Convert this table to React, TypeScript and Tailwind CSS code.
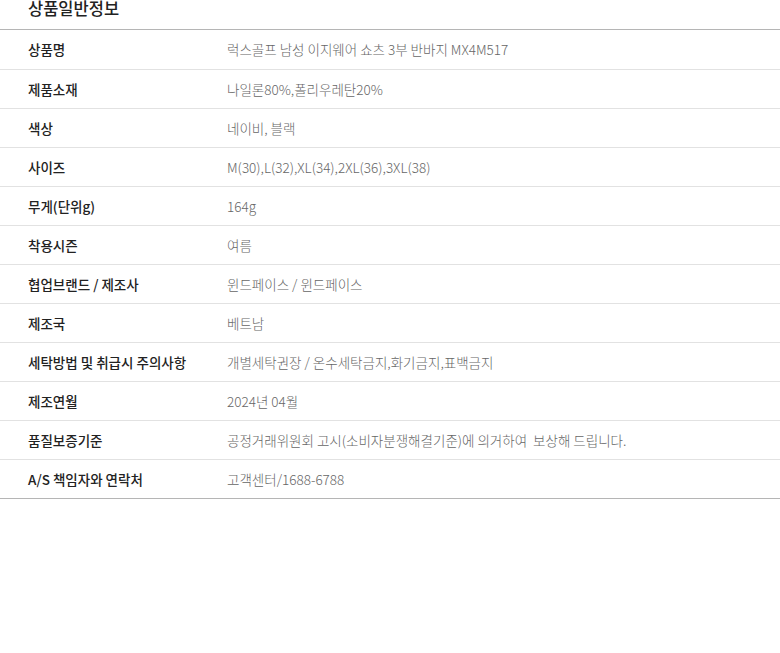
import React from 'react';

const rows: [string, string][] = [
  ['상품명', '럭스골프 남성 이지웨어 쇼츠 3부 반바지 MX4M517'],
  ['제품소재', '나일론80%,폴리우레탄20%'],
  ['색상', '네이비, 블랙'],
  ['사이즈', 'M(30),L(32),XL(34),2XL(36),3XL(38)'],
  ['무게(단위g)', '164g'],
  ['착용시즌', '여름'],
  ['협업브랜드 / 제조사', '윈드페이스 / 윈드페이스'],
  ['제조국', '베트남'],
  ['세탁방법 및 취급시 주의사항', '개별세탁권장 / 온수세탁금지,화기금지,표백금지'],
  ['제조연월', '2024년 04월'],
  ['품질보증기준', '공정거래위원회 고시(소비자분쟁해결기준)에 의거하여  보상해 드립니다.'],
  ['A/S 책임자와 연락처', '고객센터/1688-6788'],
];

function App() {
  return (
    <div
      className="w-[780px] h-[653px] bg-white"
      style={{ fontFamily: '"Noto Sans CJK KR", "Noto Sans", sans-serif' }}
    >
      <div className="h-[29px] pl-[28px] overflow-hidden">
        <h2 className="text-[16.5px] leading-[16px] font-medium text-[#222]">상품일반정보</h2>
      </div>
      <div className="border-t border-b border-[#b5b5b5]">
        {rows.map(([label, value], i) => (
          <div
            key={label}
            className={`flex items-center h-[39px] ${i > 0 ? 'border-t border-[#e2e2e2]' : ''}`}
          >
            <div className="w-[227px] pl-[28px] text-[13.5px] font-medium text-[#222] whitespace-pre">{label}</div>
            <div className="flex-1 text-[13.5px] font-light text-[#666] whitespace-pre">{value}</div>
          </div>
        ))}
      </div>
    </div>
  );
}

export default App;
